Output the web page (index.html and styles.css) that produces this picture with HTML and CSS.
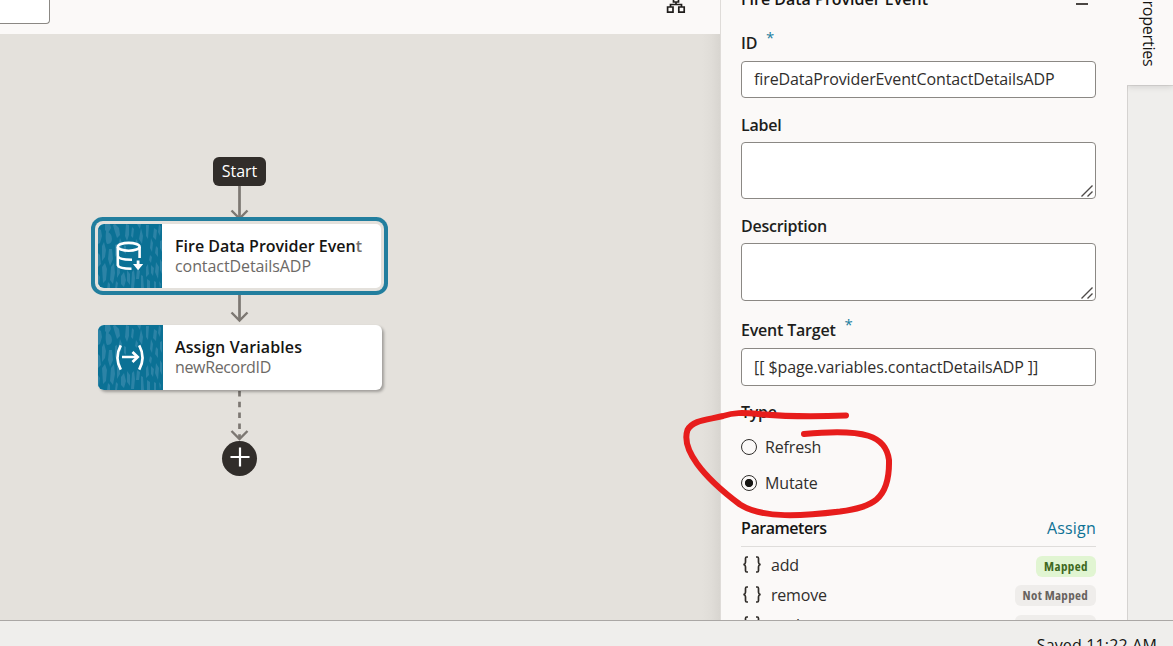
FILE: index.html
```
<!DOCTYPE html>
<html lang="en">
<head>
<meta charset="utf-8">
<title>Action Chain</title>
<link rel="stylesheet" href="styles.css">
</head>
<body>
<svg class="defs" width="0" height="0" aria-hidden="true">
  <defs>
    <g id="texture" fill="#2c83a6">
      <path d="M7 0h5l1 4-3 5-3-3zM0 4l3 2 1 6-2 7-2 1zM8 7q6 2 6 8 0 5-5 5-2-3-1-13zM15 1l2-1 4 4 1 7-3 3-2-6zM28 0l3 1v10l-2 6-2-5zM34 3l2 2-1 9-2-2zM39 0h4l-1 5zM43 4l2 8-1 8-3-5zM48 1l3 0-1 14-2-3zM56 4l3 2-1 10-3-3zM61 0l2 3-1 9-2-4z"/>
      <path d="M4 22l2-4 2 8-1 7-3 4zM22 14l2 5-1 8-3-4zM17 21l2-1 1 9-3 4zM11 25l3 0 1 10-3 7-2-7zM0 29l2 2 1 9-3 3zM26 21l2 1 0 8-2-2zM38 15l2 3-1 5-2-2zM53 14l2 5-1 9-2-4zM58 22l2 2 0 9-3-4zM62 17l2-1v12l-2-4z"/>
      <path d="M4 43l3-4 2 6-1 11-3 3zM0 50l2 3-1 8-1 3zM13 43l3-4 1 10-2 11-3-4zM19 36l2 0 1 13-3 5zM10 58l2 2 0 5H9zM23 52l3-4 2 8-2 7-3-3zM29 46l3 4 0 11-3-4zM34 48l2-2 1 8-1 10h-3zM39 45l3 2-1 8-3 0zM43 51l2 1 1 13h-3zM48 43l2-3 1 10-3 3zM49 55l3 2 0 8h-3zM53 41l3 3-1 8-2-3zM58 38l3 5-1 12-3-7zM62 35l2 3v12l-2-4zM56 57l2 1v7h-2zM61 57l2 3-1 5zM18 57l2 2-1 6h-2zM52 31l2 2-1 6-2-3z"/>
    </g>
    <g id="arrowhead" fill="none" stroke="#7c7772" stroke-width="2.4"><path d="M-8-8L0 0L8-8"/></g>
    <g id="braces" fill="none" stroke="#302c29" stroke-width="1.7"><path d="M6 1H4.700Q3.500 1 3.500 2.400V6.200Q3.500 8 1.500 8.500Q3.500 9 3.500 10.800V14.600Q3.500 16 4.700 16H6M14 1h1.300Q16.500 1 16.500 2.400V6.200Q16.500 8 18.500 8.500Q16.500 9 16.500 10.800V14.600Q16.500 16 15.300 16H14"/></g>
  </defs>
</svg>
<div class="app">
  <div class="workspace">
    <main class="editor">
      <div class="toolbar">
        <div class="search-box"></div>
        <svg class="layout-icon" width="20" height="16" viewBox="0 0 20 16" fill="none" stroke="#201e1c" stroke-width="1.700"><path d="M7.500-3h5v5h-5zM10 2v3M4.500 7V4.500h11V7M1.600 7h5.400v5.200H1.600zM12.800 7h5.400v5.200h-5.400z"/></svg>
      </div>
      <div class="canvas">
        <svg class="connectors" width="720" height="586" viewBox="0 34 720 586">
          <g stroke="#7c7772" stroke-width="2.700" fill="none"><path d="M239.500 186V218M239.500 294V320"/><path d="M239.500 391V438" stroke-dasharray="5.500 5.300"/></g>
          <use href="#arrowhead" x="239.500" y="218.500"/><use href="#arrowhead" x="239.500" y="320.500"/><use href="#arrowhead" x="239.500" y="439"/>
        </svg>
        <div class="node-start">Start</div>
        <div class="node node-event selected">
          <svg class="tile" width="64" height="64" viewBox="0 0 64 64"><use href="#texture"/>
            <g fill="none" stroke="#fff" stroke-width="2.600"><ellipse cx="30.700" cy="22.800" rx="10.900" ry="3.900"/><path d="M19.800 23V41.300Q20.500 44.700 33.500 44.700M19.800 32Q20.500 35.800 34 35.700M41.600 23V34"/></g>
            <path d="M38.700 36.500h2.800v3.400h3.700L40.100 46.300l-5.100-6.400h3.700z" fill="#fff"/>
          </svg>
          <div class="node-text"><div class="node-title">Fire Data Provider Even<span class="fade">t</span></div><div class="node-sub">contactDetailsADP</div></div>
        </div>
        <div class="node node-assign">
          <svg class="tile" width="65" height="65" viewBox="0 0 65 65"><use href="#texture"/>
            <g fill="none" stroke="#fff" stroke-width="2.700"><path d="M22.800 20.300Q16.200 32.500 22.800 44.700M41.200 20.300Q47.800 32.500 41.200 44.700M24 32H39.500"/><path d="M34.500 27L39.700 32L34.500 37"/></g>
          </svg>
          <div class="node-text"><div class="node-title assign-title">Assign Variables</div><div class="node-sub record">newRecordID</div></div>
        </div>
        <div class="add-button"><svg width="20" height="20" viewBox="0 0 20 20" stroke="#fff" stroke-width="2.200"><path d="M10 .5v19M.5 10h19"/></svg></div>
      </div>
    </main>
    <aside class="panel">
      <div class="panel-title"><span>Fire Data Provider Event</span><i class="collapse"></i></div>
      <label class="label">ID<span class="required">*</span></label>
      <div class="input">fireDataProviderEventContactDetailsADP</div>
      <label class="label">Label</label>
      <div class="textarea"><svg width="12" height="12" viewBox="0 0 12 12" stroke="#4d4a48" stroke-width="1.400"><path d="M.5 11.500L11.500.5M6.500 11.500L11.500 6.500"/></svg></div>
      <label class="label desc-label">Description</label>
      <div class="textarea tall"><svg width="12" height="12" viewBox="0 0 12 12" stroke="#4d4a48" stroke-width="1.400"><path d="M.5 11.500L11.500.5M6.500 11.500L11.500 6.500"/></svg></div>
      <label class="label target-label">Event Target<span class="required">*</span></label>
      <div class="input target">[[ $page.variables.contactDetailsADP ]]</div>
      <label class="label type-label">Type</label>
      <div class="radio"><i></i><span>Refresh</span></div>
      <div class="radio checked"><i></i><span>Mutate</span></div>
      <div class="params-head"><span>Parameters</span><a>Assign</a></div>
      <div class="param"><svg width="20" height="17"><use href="#braces"/></svg><span>add</span><b class="badge mapped">Mapped</b></div>
      <div class="param"><svg width="20" height="17"><use href="#braces"/></svg><span>remove</span><b class="badge">Not Mapped</b></div>
      <div class="param"><svg width="20" height="17"><use href="#braces"/></svg><span>update</span><b class="badge">Not Mapped</b></div>
    </aside>
    <nav class="rail"><div class="rail-tab"><span>Properties</span></div><div class="rail-body"></div></nav>
  </div>
  <footer class="status">Saved 11:22 AM</footer>
  <svg class="scribble" width="1173" height="646" viewBox="0 0 1173 646"><path d="M846 415.500C812 417 784 416.500 758 414C742 412.500 734 412.500 723 416C707 420 693 420 687.500 430C681 449 702 476 740 504.500C763 519 803 516 840 511.500C871 507 890 501 889 460C886 436 865 428 804 434"/></svg>
</div>
</body>
</html>
```
FILE: styles.css
```
* { box-sizing: border-box; }
body { margin: 0; font: 16px/24px "Open Sans", "Noto Sans", sans-serif; color: #161513; overflow: hidden; }
.defs { position: absolute; }
.app { position: relative; width: 1173px; height: 646px; overflow: hidden; display: flex; flex-direction: column; background: #efeeec; }
.workspace { height: 620px; display: flex; overflow: hidden; }
.editor { width: 720px; display: flex; flex-direction: column; }
.toolbar { height: 34px; background: #fbf9f8; display: flex; justify-content: space-between; align-items: flex-start; padding-right: 34px; overflow: hidden; }
.search-box { width: 50px; height: 24px; background: #fff; border: 1px solid #8b8884; border-width: 0 1px 1px 0; border-radius: 0 0 4px 0; }
.layout-icon { overflow: visible; }
.canvas { position: relative; height: 586px; background: linear-gradient(to right, #e4e1dc 0, #e4e1dc 702px, #e0ddd8 711px, #d8d5d0 720px); }
.connectors { position: absolute; left: 0; top: 0; }
.node-start { position: absolute; left: 213px; top: 123px; width: 53px; height: 29px; border-radius: 6px; background: #312d2a; color: #fff; text-align: center; line-height: 28px; }
.node { position: absolute; left: 98px; display: flex; background: #fff; border-radius: 6px; box-shadow: 2px 2px 3px rgba(0,0,0,.3); }
.node-event { top: 190px; width: 283px; height: 64px; }
.node-assign { top: 291px; width: 284px; height: 65px; }
.selected { box-shadow: 0 0 0 3px #e4e1dc, 0 0 0 7px #227e9e; border-radius: 5px; }
.tile { background: #0b7195; border-radius: 6px 0 0 6px; flex: none; }
.node-text { padding: 12px 0 0 13px; line-height: 20px; white-space: nowrap; }
.node-assign .node-text { padding-left: 12px; }
.node-title { font-weight: 600; }
.assign-title { letter-spacing: .12px; }
.fade { color: #73706d; }
.node-sub { color: #6c6966; letter-spacing: -.08px; }
.record { letter-spacing: -.35px; }
.add-button { position: absolute; left: 222px; top: 407px; width: 35px; height: 35px; border-radius: 50%; background: #312d2a; display: flex; justify-content: center; padding-top: 6px; }
.panel { width: 407px; height: 620px; overflow: hidden; background: #fbf9f8; border-left: 1px solid #dfdcd9; padding: 0 31px 0 20px; display: flex; flex-direction: column; }
.panel > * { flex: none; }
.panel-title { height: 24px; margin-top: -13px; font-weight: 600; display: flex; justify-content: space-between; align-items: center; }
.collapse { width: 12px; height: 2px; margin: 9px 8px 0 0; background: #4a4643; }
.label { height: 24px; margin-top: 15px; font-weight: 600; letter-spacing: -.25px; color: #201e1c; display: flex; }
.panel-title + .label { margin-top: 20px; }
.required { color: #227e9e; font-weight: 400; font-size: 15px; margin: -6px 0 0 9px; }
.input { height: 37px; margin-top: 6px; border: 1px solid #8b8884; border-radius: 4px; background: #fff; padding: 0 12px; line-height: 35px; letter-spacing: -.1px; color: #302e2c; }
.target { height: 38px; line-height: 36px; letter-spacing: -.08px; }
.textarea { height: 57px; margin-top: 5px; border: 1px solid #8b8884; border-radius: 4px; background: #fff; display: flex; justify-content: flex-end; align-items: flex-end; padding: 0 2px 1px; }
.tall { height: 58px; }
.target-label { margin-top: 17px; letter-spacing: -.2px; }
.type-label { margin-top: 14px; }
.radio { height: 24px; margin-top: 11px; display: flex; align-items: center; gap: 8px; letter-spacing: -.15px; color: #302e2c; }
.radio + .radio { margin-top: 12px; }
.radio i { width: 16px; height: 16px; border: 1px solid #302e2c; border-radius: 50%; }
.checked i { background: radial-gradient(circle, #161513 3.700px, transparent 4.500px); }
.params-head { height: 32px; margin-top: 20px; padding-top: 1px; border-bottom: 1px solid #dfdddb; font-weight: 600; letter-spacing: -.45px; display: flex; justify-content: space-between; }
.params-head a { font-weight: 400; color: #0e7295; letter-spacing: .2px; }
.params-head + .param { margin-top: 3px; }
.param { height: 30px; display: flex; align-items: center; color: #302e2c; padding-left: 1px; letter-spacing: -.2px; }
.param svg { margin-top: -2px; }
.param span { margin-left: 9px; flex: 1; }
.badge { height: 21px; border-radius: 6px; padding: 0 8px; background: #efedeb; color: #68635f; font-size: 13px; line-height: 21px; font-weight: 700; font-stretch: 80%; letter-spacing: .3px; }
.mapped { background: #e1f5d2; color: #40691f; margin-top: 2px; letter-spacing: .4px; }
.rail { width: 46px; display: flex; flex-direction: column; background: #efeeec; }
.rail-tab { height: 85px; background: #fbf9f8; display: flex; justify-content: center; align-items: flex-end; padding: 0 2px 19px 0; box-shadow: 0 2px 6px rgba(0,0,0,.12); clip-path: inset(0 0 -8px 0); }
.rail-tab span { writing-mode: vertical-rl; line-height: 22px; letter-spacing: -.2px; }
.rail-body { flex: 1; border-left: 1px solid #d5d3d1; border-top: 1px solid #dedcda; }
.status { height: 26px; border-top: 1px solid #aaa7a5; padding: 12px 16px 0 0; text-align: right; letter-spacing: .16px; white-space: nowrap; }
.scribble { position: absolute; left: 0; top: 0; fill: none; stroke: #e71d1c; stroke-width: 6; stroke-linecap: round; stroke-linejoin: round; pointer-events: none; }
```
